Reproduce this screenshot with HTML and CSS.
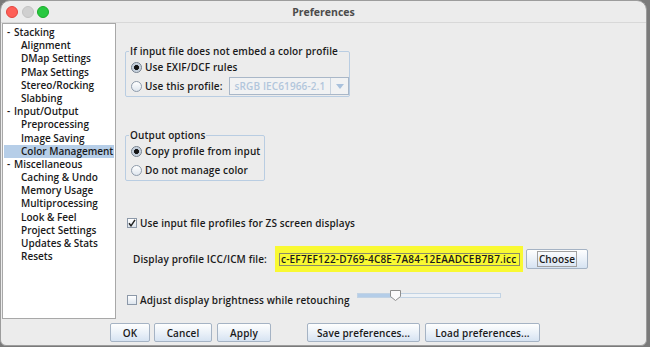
FILE: index.html
```html
<!DOCTYPE html>
<html lang="en">

<head>
    <meta charset="UTF-8">
    <title>Preferences</title>
    <link rel="stylesheet" href="styles.css">
</head>

<body>
    <div class="window">
        <!-- title bar -->
        <div class="titlebar">
            <div class="lights">
                <span class="light red"></span>
                <span class="light off"></span>
                <span class="light green"></span>
            </div>
            <div class="title">Preferences</div>
            <div></div>
        </div>

        <div class="main">
            <!-- left tree -->
            <ul class="tree">
                <li class="node"><span class="minus">-</span>Stacking</li>
                <li class="leaf">Alignment</li>
                <li class="leaf">DMap Settings</li>
                <li class="leaf">PMax Settings</li>
                <li class="leaf">Stereo/Rocking</li>
                <li class="leaf">Slabbing</li>
                <li class="node"><span class="minus">-</span>Input/Output</li>
                <li class="leaf">Preprocessing</li>
                <li class="leaf">Image Saving</li>
                <li class="leaf selected">Color Management</li>
                <li class="node"><span class="minus">-</span>Miscellaneous</li>
                <li class="leaf">Caching &amp; Undo</li>
                <li class="leaf">Memory Usage</li>
                <li class="leaf">Multiprocessing</li>
                <li class="leaf">Look &amp; Feel</li>
                <li class="leaf">Project Settings</li>
                <li class="leaf">Updates &amp; Stats</li>
                <li class="leaf">Resets</li>
            </ul>

            <!-- right pane -->
            <div class="pane">
                <fieldset class="group group-input">
                    <legend>If input file does not embed a color profile</legend>
                    <div class="row">
                        <span class="radio on"></span>
                        <span>Use EXIF/DCF rules</span>
                    </div>
                    <div class="row">
                        <span class="radio"></span>
                        <span>Use this profile:</span>
                        <div class="combo">
                            <span class="combo-text">sRGB IEC61966-2.1</span>
                            <span class="combo-arrow">
                                <svg width="8" height="5" viewBox="0 0 8 5"><path d="M0 0 L8 0 L4 5 Z" fill="#a9c1dc"/></svg>
                            </span>
                        </div>
                    </div>
                </fieldset>

                <fieldset class="group group-output">
                    <legend>Output options</legend>
                    <div class="row">
                        <span class="radio on"></span>
                        <span>Copy profile from input</span>
                    </div>
                    <div class="row">
                        <span class="radio"></span>
                        <span>Do not manage color</span>
                    </div>
                </fieldset>

                <div class="row check-row">
                    <span class="check">
                        <svg width="8" height="8" viewBox="0 0 8 8"><path d="M1 4.2 L3 6.8 L7 0.8" fill="none" stroke="#222" stroke-width="1.5"/></svg>
                    </span>
                    <span>Use input file profiles for ZS screen displays</span>
                </div>

                <div class="file-row">
                    <span class="file-label">Display profile ICC/ICM file:</span>
                    <div class="highlight">
                        <div class="file-field">c-EF7EF122-D769-4C8E-7A84-12EAADCEB7B7.icc</div>
                    </div>
                    <button class="btn btn-choose"><span class="focus">Choose</span></button>
                </div>

                <div class="row adjust-row">
                    <span class="check"></span>
                    <span class="adjust-label">Adjust display brightness while retouching</span>
                    <div class="slider">
                        <div class="track"><div class="fill"></div></div>
                        <svg class="thumb" width="13" height="13" viewBox="0 0 13 13">
                            <path d="M1.5 1.5 H11.5 V7.5 L6.5 11.5 L1.5 7.5 Z" fill="#fbfbfb" stroke="#8e8e8e"/>
                        </svg>
                    </div>
                </div>
            </div>
        </div>

        <!-- bottom buttons -->
        <div class="buttons">
            <button class="btn btn-ok">OK</button>
            <button class="btn btn-cancel">Cancel</button>
            <button class="btn btn-apply">Apply</button>
            <button class="btn btn-save">Save preferences...</button>
            <button class="btn btn-load">Load preferences...</button>
        </div>
    </div>
</body>

</html>
```

FILE: styles.css
```css
* {
    margin: 0;
    padding: 0;
    box-sizing: border-box;
}

body {
    width: 650px;
    height: 347px;
    background-color: #7a7a7a;
    font-family: "Open Sans", "DejaVu Sans", sans-serif;
    font-size: 10px;
    font-weight: 600;
    letter-spacing: 0.12px;
    color: #1a1a1a;
    overflow: hidden;
}

.window {
    width: 647px;
    height: 346px;
    background-color: #ececec;
    border: 1px solid #9c9c9c;
    border-radius: 10px 10px 6px 6px;
    display: flex;
    flex-direction: column;
    overflow: hidden;
}

/* title bar */
.titlebar {
    height: 22px;
    flex: none;
    border-bottom: 1px solid #d8d8d8;
    display: grid;
    grid-template-columns: 1fr auto 1fr;
    align-items: center;
}

.lights {
    display: flex;
    gap: 3.5px;
    padding-left: 5px;
}

.light {
    width: 12px;
    height: 12px;
    border-radius: 50%;
}

.red {
    background-color: #fe5f57;
    border: 0.5px solid #e2463f;
}

.off {
    background-color: #d0d0d0;
    border: 0.5px solid #c2c2c2;
}

.green {
    background-color: #28c840;
    border: 0.5px solid #1aab29;
}

.title {
    font-size: 10.5px;
    font-weight: 700;
    letter-spacing: 0;
    color: #4b4b4b;
}

.main {
    display: flex;
    flex: none;
}

/* tree */
.tree {
    list-style: none;
    width: 114px;
    height: 296px;
    margin-left: 1px;
    background-color: #fff;
    border: 1px solid #a8a8a8;
    padding-top: 2px;
    letter-spacing: 0;
}

.tree li {
    height: 13.2px;
    line-height: 13.2px;
    white-space: nowrap;
}

.node {
    padding-left: 3px;
}

.minus {
    display: inline-block;
    width: 8px;
    padding-left: 1px;
}

.leaf {
    padding-left: 18px;
}

.selected {
    background-color: #b6cee8;
    margin: 0 1px 0 1px;
    padding-left: 17px;
}

/* right pane */
.pane {
    flex: 1;
    padding-left: 9px;
    display: flex;
    flex-direction: column;
    align-items: flex-start;
}

.group {
    border: 1px solid #b9cde2;
    border-radius: 2px;
    padding: 0 0 1px 5px;
    min-width: 0;
}

.group legend {
    line-height: 13px;
    padding: 0 1px;
    margin-left: -2px;
}

.group-input {
    width: 225px;
    margin-top: 22px;
}

.group-output {
    width: 140px;
    margin-top: 32px;
}

.row {
    display: flex;
    align-items: center;
    height: 18px;
    gap: 3px;
    white-space: nowrap;
}

.group .row + .row {
    margin-top: 1px;
}

.radio {
    width: 11px;
    height: 11px;
    border-radius: 50%;
    border: 1px solid #8e9bab;
    background: linear-gradient(#ffffff, #dfe6ee);
    flex: none;
    position: relative;
}

.radio.on {
    background: radial-gradient(circle, #151515 0 2.2px, #bcc8d6 2.8px, #e8edf2 100%);
    border-color: #737f8d;
}

.combo {
    width: 124px;
    height: 18px;
    margin-left: 3px;
    border: 1px solid #a9b7c8;
    background-color: #f1f2f3;
    display: flex;
    align-items: center;
}

.combo-text {
    flex: 1;
    padding-left: 5px;
    color: #b2c6dc;
}

.combo-arrow {
    width: 18px;
    height: 100%;
    border-left: 1px solid #c8d3df;
    display: flex;
    align-items: center;
    justify-content: center;
}

.check-row {
    margin-top: 33px;
    margin-left: 2px;
}

.check {
    width: 10px;
    height: 10px;
    border: 1px solid #8c98a8;
    background: linear-gradient(#ffffff, #dde5ee);
    flex: none;
    display: flex;
    align-items: center;
    justify-content: center;
}

.check svg {
    display: block;
}

/* profile file row */
.file-row {
    display: flex;
    align-items: center;
    margin-top: 14px;
    white-space: nowrap;
}

.file-label {
    width: 150px;
    padding-left: 8px;
}

.highlight {
    width: 248px;
    height: 26px;
    background-color: #f9f932;
    display: flex;
    align-items: center;
    padding-left: 4px;
}

.file-field {
    width: 241px;
    height: 13px;
    border: 1px solid #8a8a6a;
    line-height: 11px;
    padding-left: 1px;
    font-size: 10px;
    letter-spacing: 0.2px;
    overflow: hidden;
}

.btn {
    font-family: inherit;
    font-size: 10px;
    font-weight: 600;
    letter-spacing: 0.12px;
    color: #1a1a1a;
    height: 19px;
    border: 1px solid #a5b3c4;
    border-radius: 2px;
    background: linear-gradient(#fefefe, #e9f0f8 55%, #d6e3f2);
}

.btn-choose {
    width: 62px;
    height: 20px;
    margin-left: 3px;
}

.focus {
    border: 1px solid #a0a0a0;
    padding: 0 1px;
}

/* brightness row */
.adjust-row {
    margin-top: 19px;
    margin-left: 2px;
    align-items: center;
}

.adjust-label {
    width: 214px;
}

.slider {
    position: relative;
    width: 144px;
    height: 12px;
    margin-top: -8px;
}

.track {
    position: absolute;
    left: 0;
    right: 0;
    top: 3px;
    height: 5px;
    border: 1px solid #c2d3e4;
    background-color: #eef2f6;
}

.fill {
    width: 35px;
    height: 100%;
    background-color: #b4cde8;
}

.thumb {
    position: absolute;
    left: 32px;
    top: -1px;
}

/* bottom buttons */
.buttons {
    display: flex;
    margin-top: 4px;
    padding-left: 109px;
}

.btn-ok {
    width: 40px;
}

.btn-cancel {
    width: 58px;
    margin-left: 4px;
}

.btn-apply {
    width: 54px;
    margin-left: 5px;
}

.btn-save {
    width: 113px;
    margin-left: 36px;
}

.btn-load {
    width: 115px;
    margin-left: 5px;
}
```
